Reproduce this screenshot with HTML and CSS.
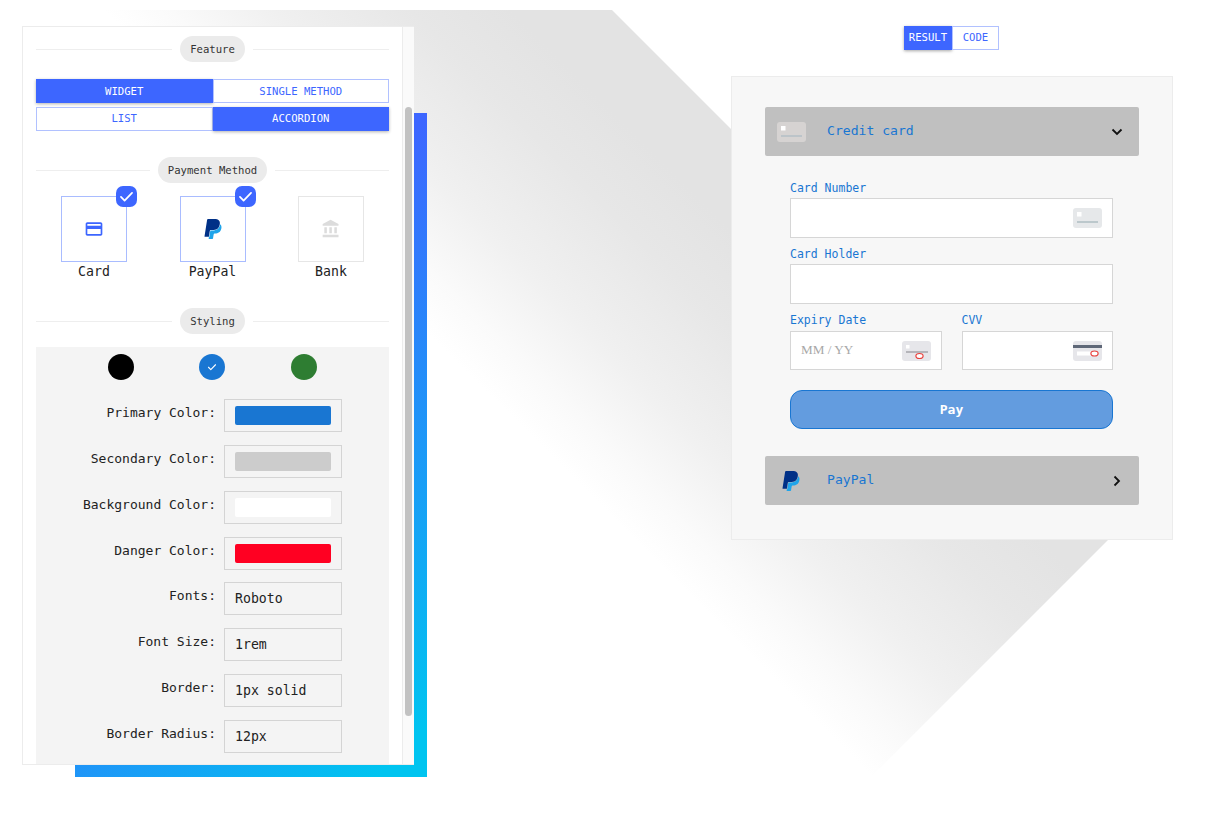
FILE: index.html
```html
<!DOCTYPE html>
<html lang="en">
<head>
<meta charset="utf-8">
<title>Payment widget</title>
<link rel="stylesheet" href="styles.css">
</head>
<body>
<svg class="backdrop" width="1207" height="819" viewBox="0 0 1207 819" aria-hidden="true">
  <defs>
    <linearGradient id="fade" gradientUnits="userSpaceOnUse" x1="700" y1="98" x2="446.5" y2="351.5">
      <stop offset="0" stop-color="#e3e3e3"/>
      <stop offset="0.2" stop-color="#e3e3e3"/>
      <stop offset="0.4" stop-color="#e7e7e7"/>
      <stop offset="0.67" stop-color="#f0f0f0"/>
      <stop offset="0.87" stop-color="#fafafa"/>
      <stop offset="1" stop-color="#ffffff"/>
    </linearGradient>
  </defs>
  <polygon points="105,10 612,10 1125,523 872,776" fill="url(#fade)"/>
</svg>
<svg width="0" height="0" class="defs" aria-hidden="true">
  <defs>
    <symbol id="paypal" viewBox="0 0 24 24">
      <path fill="#1fa4ea" d="M21.222 6.917a3.35 3.35 0 0 0-.607-.541c-.013.076-.026.175-.041.254-.93 4.778-4.005 7.201-9.138 7.201h-2.19a.563.563 0 0 0-.556.479l-1.187 7.527h-.506l-.24 1.516a.56.56 0 0 0 .554.647h3.882c.46 0 .85-.334.922-.788.06-.26.76-4.852.816-5.09a.932.932 0 0 1 .923-.788h.58c3.76 0 6.705-1.528 7.565-5.946.36-1.847.174-3.388-.777-4.471z"/>
      <path fill="#003087" d="M7.076 21.337H2.47a.641.641 0 0 1-.633-.74L4.944.901C5.026.382 5.474 0 5.998 0h7.46c2.57 0 4.578.543 5.69 1.81 1.01 1.15 1.304 2.42 1.012 4.287-.023.143-.047.288-.077.437-.983 5.05-4.349 6.797-8.647 6.797h-2.19c-.524 0-.968.382-1.05.9l-1.12 7.106z"/>
    </symbol>
    <symbol id="tick" viewBox="0 0 24 24">
      <path fill="none" stroke="#fff" stroke-width="2.2" stroke-linecap="round" stroke-linejoin="round" d="M5 12.5l4.6 4.6L19 7.5"/>
    </symbol>
  </defs>
</svg>

<main class="stage">
  <section class="panel-wrap">
    <div class="panel-back"></div>
    <div class="panel">
      <div class="panel-body">
        <div class="heading heading-first"><span class="pill">Feature</span></div>
        <div class="seg">
          <button class="seg-btn on">WIDGET</button>
          <button class="seg-btn">SINGLE METHOD</button>
        </div>
        <div class="seg seg-second">
          <button class="seg-btn">LIST</button>
          <button class="seg-btn on">ACCORDION</button>
        </div>

        <div class="heading heading-pay"><span class="pill">Payment Method</span></div>
        <div class="tiles">
          <div class="tile-col">
            <div class="tile active">
              <svg class="tile-icon" viewBox="0 0 24 24"><path fill="#3d66ff" d="M20 4H4c-1.11 0-1.99.89-1.99 2L2 18c0 1.11.89 2 2 2h16c1.11 0 2-.89 2-2V6c0-1.11-.89-2-2-2zm0 14H4v-6h16v6zm0-10H4V6h16v2z"/></svg>
              <span class="badge"><svg class="badge-tick"><use href="#tick"/></svg></span>
            </div>
            <span class="tile-label">Card</span>
          </div>
          <div class="tile-col">
            <div class="tile active">
              <svg class="tile-icon"><use href="#paypal"/></svg>
              <span class="badge"><svg class="badge-tick"><use href="#tick"/></svg></span>
            </div>
            <span class="tile-label">PayPal</span>
          </div>
          <div class="tile-col">
            <div class="tile">
              <svg class="tile-icon" viewBox="0 0 24 24"><path fill="#dcdcdc" d="M4 10v7h3v-7H4zm6 0v7h3v-7h-3zM2 22h19v-3H2v3zm14-12v7h3v-7h-3zm-4.500-9L2 6v2h19V6l-9.500-5z"/></svg>
            </div>
            <span class="tile-label">Bank</span>
          </div>
        </div>

        <div class="heading heading-style"><span class="pill">Styling</span></div>
        <div class="styling">
          <div class="dots">
            <span class="dot dot-black"></span>
            <span class="dot dot-blue"><svg class="dot-tick"><use href="#tick"/></svg></span>
            <span class="dot dot-green"></span>
          </div>
          <div class="form-row"><span class="form-label">Primary Color:</span><span class="field"><span class="swatch sw-primary"></span></span></div>
          <div class="form-row"><span class="form-label">Secondary Color:</span><span class="field"><span class="swatch sw-secondary"></span></span></div>
          <div class="form-row"><span class="form-label">Background Color:</span><span class="field"><span class="swatch sw-bg"></span></span></div>
          <div class="form-row"><span class="form-label">Danger Color:</span><span class="field"><span class="swatch sw-danger"></span></span></div>
          <div class="form-row"><span class="form-label">Fonts:</span><span class="field">Roboto</span></div>
          <div class="form-row"><span class="form-label">Font Size:</span><span class="field">1rem</span></div>
          <div class="form-row"><span class="form-label">Border:</span><span class="field">1px solid</span></div>
          <div class="form-row"><span class="form-label">Border Radius:</span><span class="field">12px</span></div>
        </div>
      </div>
      <div class="scroll-track"><div class="scroll-thumb"></div></div>
    </div>
  </section>

  <section class="preview">
    <div class="tabs">
      <button class="tab on">RESULT</button>
      <button class="tab">CODE</button>
    </div>
    <div class="card">
      <div class="acc-head">
        <svg class="acc-icon" viewBox="0 0 29 20"><rect width="29" height="20" rx="3" fill="#d6d3d2"/><rect x="4" y="4" width="4.500" height="4.500" fill="#fff"/><rect x="4" y="13" width="21" height="2" fill="#bcc4c9"/></svg>
        <span class="acc-title">Credit card</span>
        <svg class="chev" viewBox="0 0 12 12"><path fill="none" stroke="#111" stroke-width="1.800" d="M1.500 3.500L6 8l4.500-4.500"/></svg>
      </div>
      <div class="pay-form">
        <label class="lbl">Card Number</label>
        <div class="inp">
          <svg class="inp-icon" viewBox="0 0 29 20"><rect width="29" height="20" rx="3" fill="#e6e8ea"/><rect x="4" y="4" width="4.500" height="4.500" fill="#fff"/><rect x="4" y="13" width="21" height="2" fill="#bcc8cc"/></svg>
        </div>
        <label class="lbl lbl-next">Card Holder</label>
        <div class="inp"></div>
        <div class="split">
          <div class="split-col">
            <label class="lbl lbl-next">Expiry Date</label>
            <div class="inp inp-short"><span class="placeholder">MM / YY</span>
              <svg class="inp-icon" viewBox="0 0 29 20"><rect width="29" height="20" rx="3" fill="#e6e6ea"/><rect x="4" y="4" width="3.500" height="3.500" fill="#fff"/><rect x="4" y="10" width="22" height="2" fill="#b5b5ba"/><ellipse cx="17.500" cy="15" rx="3.600" ry="2.500" fill="#fff" stroke="#e8403c" stroke-width="1.200"/></svg>
            </div>
          </div>
          <div class="split-col">
            <label class="lbl lbl-next">CVV</label>
            <div class="inp inp-short">
              <svg class="inp-icon" viewBox="0 0 29 20"><rect width="29" height="20" rx="3" fill="#e6e6ea"/><rect y="4" width="29" height="3" fill="#5f6878"/><rect x="4" y="10.500" width="19" height="4" fill="#fff"/><ellipse cx="21.500" cy="12.500" rx="3.600" ry="2.500" fill="#fff" stroke="#e8403c" stroke-width="1.200"/></svg>
            </div>
          </div>
        </div>
        <button class="pay">Pay</button>
      </div>
      <div class="acc-head">
        <svg class="acc-paypal"><use href="#paypal"/></svg>
        <span class="acc-title">PayPal</span>
        <svg class="chev" viewBox="0 0 12 12"><path fill="none" stroke="#111" stroke-width="1.800" d="M3.500 1.500L8 6l-4.500 4.500"/></svg>
      </div>
    </div>
  </section>
</main>
</body>
</html>
```
FILE: styles.css
```css
* { box-sizing: border-box; }
html, body { margin: 0; padding: 0; }
body {
  position: relative;
  width: 1207px;
  height: 819px;
  overflow: hidden;
  background: #fff;
  font-family: "DejaVu Sans Mono", monospace;
  color: #222;
}
.backdrop { position: absolute; left: 0; top: 0; }
.defs { position: absolute; }
button { font-family: inherit; cursor: pointer; }

.stage {
  position: relative;
  display: flex;
  align-items: flex-start;
  padding: 26px 0 0 22px;
}

/* left panel */
.panel-wrap { position: relative; width: 392px; height: 739px; }
.panel-back {
  position: absolute;
  left: 53px;
  top: 87px;
  right: -13px;
  bottom: -12px;
  background: linear-gradient(135deg, #3d66ff 35%, #00c4f0 95%);
}
.panel {
  position: relative;
  display: flex;
  width: 100%;
  height: 100%;
  background: #fff;
  border: 1px solid #ececec;
  border-right: 0;
  overflow: hidden;
}
.panel-body {
  width: 379px;
  flex: none;
  padding: 9px 13px 0;
  height: 100%;
  overflow: hidden;
}
.scroll-track {
  flex: none;
  width: 12px;
  height: 100%;
  background: #fafafa;
  border-left: 1px solid #ececec;
  padding: 80px 2px 0 2px;
}
.scroll-thumb {
  width: 7px;
  height: 609px;
  background: #c2c2c2;
  border-radius: 4px;
}

.heading {
  display: flex;
  align-items: center;
  justify-content: center;
  gap: 8px;
  height: 26px;
}
.heading::before, .heading::after {
  content: "";
  flex: 1;
  height: 1px;
  background: #eeeeee;
}
.pill {
  display: flex;
  align-items: center;
  height: 26px;
  padding: 0 10px;
  border-radius: 13px;
  background: #ebebeb;
  font-size: 10.600px;
  color: #333;
}
.heading-pay { margin-top: 26px; }
.heading-style { margin-top: 27px; }

.seg { display: flex; height: 24px; margin-top: 17px; }
.seg-second { margin-top: 4px; }
.seg-second .seg-btn { padding-bottom: 1px; }
.seg-btn {
  flex: 1;
  padding: 0;
  border: 1px solid #b1c1ff;
  background: #fff;
  color: #3d66ff;
  font-size: 10.600px;
  line-height: 1;
}
.seg-btn.on {
  background: #3d66ff;
  border-color: #3d66ff;
  color: #fff;
  box-shadow: 0 1px 3px rgba(0, 0, 0, .3);
}

.tiles {
  display: flex;
  justify-content: space-between;
  padding: 13px 25px 0;
}
.tile-col {
  width: 66px;
  display: flex;
  flex-direction: column;
  align-items: center;
}
.tile {
  position: relative;
  width: 66px;
  height: 66px;
  border: 1px solid #e6e6e6;
  display: flex;
  align-items: center;
  justify-content: center;
}
.tile.active { border-color: #a9bcff; }
.tile-icon { width: 20px; height: 20px; }
.badge {
  position: absolute;
  right: -11px;
  top: -11px;
  width: 21px;
  height: 21px;
  border-radius: 7px;
  background: #3d66ff;
  display: flex;
  align-items: center;
  justify-content: center;
}
.badge-tick { width: 19px; height: 19px; }
.tile-label { font-size: 13.200px; line-height: 18px; margin-top: 1px; color: #222; }

.styling {
  margin-top: 13px;
  background: #f4f4f4;
  padding: 7px 0 20px;
  height: 430px;
}
.dots {
  display: flex;
  justify-content: space-between;
  padding: 0 72.500px 0 72px;
  margin-bottom: 19px;
}
.dot {
  width: 26px;
  height: 26px;
  border-radius: 50%;
  display: flex;
  align-items: center;
  justify-content: center;
}
.dot-black { background: #000; }
.dot-blue { background: #1976d2; }
.dot-green { background: #2e7d32; }
.dot-tick { width: 12px; height: 12px; }

.form-row {
  display: flex;
  align-items: flex-start;
  height: 33px;
  margin-bottom: 12.850px;
}
.form-label {
  width: 180px;
  text-align: right;
  font-size: 13px;
  line-height: 16px;
  padding-top: 6px;
  color: #222;
}
.field {
  margin-left: 8px;
  width: 118px;
  height: 33px;
  border: 1px solid #d4d4d4;
  padding: 0 10px;
  display: flex;
  align-items: center;
  font-size: 13.200px;
  color: #222;
}
.swatch { width: 96px; height: 19px; border-radius: 2px; }
.sw-primary { background: #1976d2; }
.sw-secondary { background: #cccccc; }
.sw-bg { background: #ffffff; }
.sw-danger { background: #ff0022; }

/* right column */
.preview {
  margin-left: 317px;
  width: 442px;
  display: flex;
  flex-direction: column;
  align-items: center;
}
.tabs { display: flex; height: 24px; margin-right: 1px; }
.tab {
  padding: 0 0 1px;
  border: 1px solid #b1c1ff;
  background: #fff;
  color: #3d66ff;
  font-size: 10.600px;
  line-height: 1;
  width: 47px;
}
.tab.on {
  width: 48px;
  background: #3d66ff;
  border-color: #3d66ff;
  color: #fff;
  box-shadow: 0 1px 3px rgba(0, 0, 0, .35);
}
.card {
  width: 442px;
  height: 464px;
  margin-top: 26px;
  padding: 30px 33px 0;
  background: #f7f7f7;
  border: 1px solid #ececec;
}
.acc-head {
  display: flex;
  align-items: center;
  height: 49px;
  padding: 0 16px 0 12px;
  background: #c0c0c0;
  border-radius: 2px;
}
.acc-icon { width: 29px; height: 20px; flex: none; }
.acc-paypal { width: 20px; height: 22px; flex: none; margin-right: 9px; margin-left: 4px; }
.acc-paypal + .acc-title { margin-left: 17px; }
.acc-title {
  flex: 1;
  margin-left: 21px;
  padding-bottom: 2px;
  font-size: 13.100px;
  color: #1976d2;
}
.chev { width: 12px; height: 12px; flex: none; }

.pay-form { padding: 24px 26px 27px 25px; }
.lbl {
  display: block;
  font-size: 11.500px;
  line-height: 16px;
  height: 16px;
  margin-bottom: 2px;
  color: #1976d2;
}
.lbl-next { margin-top: 8px; }
.inp {
  position: relative;
  display: flex;
  align-items: center;
  justify-content: flex-end;
  height: 40px;
  padding: 0 10px;
  background: #fff;
  border: 1px solid #d6d6d6;
}
.inp-short { height: 39px; }
.placeholder {
  flex: 1;
  padding-bottom: 1px;
  font-family: "Liberation Serif", serif;
  font-size: 13.200px;
  color: #a8a8a8;
}
.inp-icon { width: 29px; height: 20px; flex: none; }
.split { display: flex; gap: 20px; margin-top: 8px; }
.split .lbl-next { margin-top: 0; margin-bottom: 3px; }
.split-col { flex: 1; }
.pay {
  display: block;
  width: 100%;
  height: 39px;
  margin-top: 20px;
  padding-bottom: 2px;
  background: #639cdf;
  border: 1px solid #1976d2;
  border-radius: 12px;
  color: #fff;
  font-size: 13px;
  font-weight: bold;
}
```
